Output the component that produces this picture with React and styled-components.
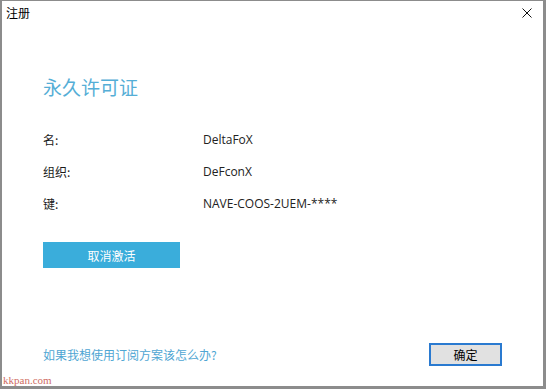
import React from 'react'
import styled, { createGlobalStyle } from 'styled-components'

const GlobalStyle = createGlobalStyle`
    html, body {
        margin: 0;
        padding: 0;
        background: #ffffff;
    }
    body {
        font-family: "Noto Sans", "Noto Sans CJK SC", sans-serif;
    }
`

const Window = styled.div`
    position: relative;
    box-sizing: border-box;
    width: 546px;
    height: 389px;
    background: #ffffff;
    border: 3px solid #8c8c8c;
    border-top-width: 1px;
    border-left-width: 2px;
    display: flex;
    flex-direction: column;
    overflow: hidden;
`

const TitleBar = styled.div`
    height: 24px;
    display: flex;
    align-items: center;
    justify-content: space-between;
    padding: 0 8px 0 4px;
`

const TitleText = styled.div`
    font-family: "Noto Sans CJK SC", sans-serif;
    font-size: 12px;
    line-height: 14px;
    color: #000000;
`

const CloseButton = styled.div`
    width: 16px;
    height: 16px;
    display: flex;
    align-items: center;
    justify-content: center;
`

const Content = styled.div`
    flex: 1;
    display: flex;
    flex-direction: column;
    padding: 50px 41px 20px 41px;
`

const Heading = styled.div`
    font-family: "Noto Sans CJK SC", sans-serif;
    font-size: 19px;
    line-height: 24px;
    font-weight: 400;
    color: #55aed6;
`

const InfoGrid = styled.div`
    margin-top: 24px;
    display: grid;
    grid-template-columns: 160px 1fr;
    grid-auto-rows: 32px;
    align-items: center;
    font-size: 12px;
    color: #1a1a1a;
`

const Label = styled.div`
    font-family: "Noto Sans CJK SC", sans-serif;
    font-size: 12px;
`

const Value = styled.div`
    font-family: "Open Sans", "Noto Sans", sans-serif;
    font-size: 12px;
    color: #222222;
`

const DeactivateButton = styled.button`
    margin-top: 23px;
    width: 137px;
    height: 26px;
    border: none;
    background: #3aaddb;
    color: #ffffff;
    font-family: "Noto Sans CJK SC", sans-serif;
    font-size: 12px;
    padding: 0;
    cursor: pointer;
`

const Spacer = styled.div`
    flex: 1;
`

const Footer = styled.div`
    display: flex;
    align-items: center;
    justify-content: space-between;
    height: 23px;
`

const HelpLink = styled.a`
    font-family: "Noto Sans CJK SC", sans-serif;
    font-size: 12px;
    color: #4fa6d3;
    text-decoration: none;
    cursor: pointer;
`

const OkButton = styled.button`
    box-sizing: border-box;
    width: 73px;
    height: 23px;
    border: 2px solid #2a7ad0;
    background: #e1e1e1;
    font-family: "Noto Sans CJK SC", sans-serif;
    font-size: 12px;
    color: #000000;
    padding: 0;
`

const Watermark = styled.div`
    position: absolute;
    left: 1px;
    bottom: 0px;
    font-family: "Liberation Serif", serif;
    font-size: 11px;
    line-height: 11px;
    color: #c0392b;
    opacity: 0.75;
`

const rows = [
    { label: '名:', value: 'DeltaFoX' },
    { label: '组织:', value: 'DeFconX' },
    { label: '键:', value: 'NAVE-COOS-2UEM-****' },
]

const App = () => {
    return (
        <>
            <GlobalStyle />
            <Window>
                <TitleBar>
                    <TitleText>注册</TitleText>
                    <CloseButton>
                        <svg width="10" height="10" viewBox="0 0 10 10">
                            <path d="M0.5 0.5 L9.5 9.5 M9.5 0.5 L0.5 9.5" stroke="#111" strokeWidth="1" fill="none" />
                        </svg>
                    </CloseButton>
                </TitleBar>
                <Content>
                    <Heading>永久许可证</Heading>
                    <InfoGrid>
                        {rows.map((r) => (
                            <React.Fragment key={r.label}>
                                <Label>{r.label}</Label>
                                <Value>{r.value}</Value>
                            </React.Fragment>
                        ))}
                    </InfoGrid>
                    <DeactivateButton>取消激活</DeactivateButton>
                    <Spacer />
                    <Footer>
                        <HelpLink>如果我想使用订阅方案该怎么办?</HelpLink>
                        <OkButton>确定</OkButton>
                    </Footer>
                </Content>
                <Watermark>kkpan.com</Watermark>
            </Window>
        </>
    )
}

export default App
